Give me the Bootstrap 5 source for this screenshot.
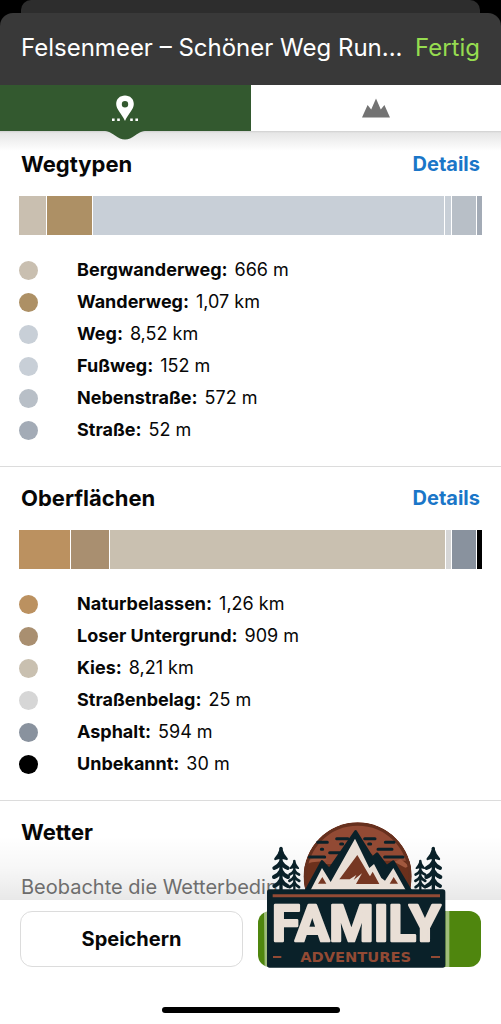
<!DOCTYPE html>
<html lang="de">
<head>
<meta charset="utf-8">
<meta name="viewport" content="width=device-width, initial-scale=1">
<title>Felsenmeer – Schöner Weg</title>
<link rel="stylesheet" href="https://cdn.jsdelivr.net/npm/bootstrap@5.3.0/dist/css/bootstrap.min.css">
<style>
  body { font-family: Inter, "Liberation Sans", sans-serif; color: #070707; background: #000; }
  .sheet-behind { height: 13px; margin: 0 21px; background: #2d2d2d; border-radius: 10px 10px 0 0; }
  .sheet-head { height: 72px; padding: 0 21px 3px; gap: 12px; background: #393939; border-radius: 13px 13px 0 0; }
  .sheet-title, .done-link { font-size: 24px; line-height: 32px; }
  .done-link { color: #96dc50; }
  .view-tab { display: block; height: 46px; border: 0; background: #fff; }
  .view-tab.active { background: #33592f; }
  .view-tab svg { display: block; margin: 0 auto; }
  .tab-notch { top: 100%; left: 50%; transform: translateX(-50%); margin-top: -1px; z-index: 3; }
  .view-tabs { z-index: 2; }
  .scroll-area { overflow-y: auto; scrollbar-width: none; min-height: 0; }
  .scroll-area::-webkit-scrollbar { display: none; }
  .shade-top, .shade-bottom { left: 0; right: 0; pointer-events: none; }
  .shade-top { top: 0; height: 20px; background: linear-gradient(#cfcfcf 0, #e6e6e6 2px, rgba(255,255,255,0)); }
  .shade-bottom { bottom: 0; height: 64px; background: linear-gradient(rgba(0,0,0,0), rgba(0,0,0,.03) 50%, rgba(0,0,0,.09)); }
  .info-block { padding: 15px 19px 20px; border-bottom: 1px solid #dcdcdc; }
  .info-block:first-child { margin-top: 2px; }
  .info-head { padding: 0 2px; }
  .info-title { font-size: 22px; line-height: 32px; font-weight: 700; }
  .info-link { font-size: 20px; line-height: 32px; font-weight: 700; color: #1a76c8; }
  .share-bar { height: 39px; gap: 1px; margin: 16px 0 19px; }
  .share-bar span { flex: 1 1 0; min-width: 5px; }
  .legend-row { height: 32px; gap: 39px; font-size: 18px; line-height: 32px; }
  .legend-row dt { font-weight: 700; }
  .legend-row dd { margin-left: 7px; }
  .dot { width: 19px; height: 19px; border-radius: 50%; flex: none; }
  .t-berg { background: #c9bfb0; } .t-wander { background: #ad9065; }
  .t-weg { background: #c8cfd7; } .t-fuss { background: #c8cfd7; }
  .t-neben { background: #b8bfc7; } .t-strasse { background: #a3abb6; }
  .s-natur { background: #bb9160; } .s-loser { background: #a98f70; }
  .s-kies { background: #c9c0b0; } .s-belag { background: #d6d6d6; }
  .s-asphalt { background: #89929e; } .s-unbekannt { background: #000; }
  .weather-note { margin: 27px 2px 0; font-size: 20px; line-height: 24px; color: #757575; }
  .foot { padding: 11px 20px; }
  .foot-actions { gap: 15px; }
  .foot-btn { height: 56px; border-radius: 12px; font-size: 20px; font-weight: 700; }
  .save-btn, .save-btn:hover { background: #fff; border: 1px solid #dcdcdc; color: #070707; }
  .go-btn, .go-btn:hover { background: #4f860e; border: 0; }
  .brand-mark { left: 4px; bottom: -1px; pointer-events: none; }
  .brand-name { font-family: "Liberation Sans Narrow", Roboto, sans-serif; font-weight: 700; font-size: 152px; }
  .brand-sub { font-family: "DejaVu Sans", sans-serif; font-weight: 700; font-size: 44px; }
  .home-bar { width: 178px; height: 6px; border-radius: 3px; background: #000; margin: 40px auto 0; }
</style>
</head>
<body>
<div class="d-flex flex-column vh-100">
  <div class="sheet-behind flex-shrink-0"></div>
  <header class="sheet-head d-flex align-items-center flex-shrink-0">
    <h1 class="sheet-title text-white fw-normal text-nowrap flex-fill mb-0">Felsenmeer – Schöner Weg Run...</h1>
    <a href="#" class="done-link text-decoration-none">Fertig</a>
  </header>

  <nav class="view-tabs row g-0 flex-shrink-0 position-relative" aria-label="Ansicht">
    <div class="col-6 position-relative">
      <button type="button" class="view-tab active w-100 p-0" aria-label="Karte">
        <svg width="28" height="28" viewBox="0 0 28 28" fill="#fff"><path fill-rule="evenodd" d="M14 1.500C8.800 1.500 5.200 5 5.200 10c0 5.500 5.500 9.500 8.800 17 3.300-7.500 8.800-11.500 8.800-17 0-5-3.600-8.500-8.800-8.500zm0 5.500a3.200 3.200 0 1 1 0 6.400 3.200 3.200 0 0 1 0-6.400z"/><path d="M1 24.500h2.600v2.600H1zM6.200 24.500h2.600v2.600H6.200zM19.200 24.500h2.600v2.600h-2.600zM24.400 24.500H27v2.600h-2.600z"/></svg>
      </button>
      <svg class="tab-notch position-absolute" width="44" height="10" viewBox="0 0 44 10"><path d="M0 0h44v1c-6 0-8 2-12 4.500C28 8 26 9.500 22 9.500S16 8 12 5.500C8 3 6 1 0 1z" fill="#33592f"/></svg>
    </div>
    <div class="col-6">
      <button type="button" class="view-tab w-100 p-0" aria-label="Höhenprofil">
        <svg width="28" height="20" viewBox="0 0 28 20" fill="#737373"><path d="M0 19.500L5.600 7l3.600 4.500L14 .500l4.800 11L22.400 7 28 19.500z"/></svg>
      </button>
    </div>
  </nav>

  <div class="position-relative flex-fill d-flex flex-column bg-white overflow-hidden">
    <div class="shade-top position-absolute"></div>
    <main class="scroll-area flex-fill">
      <section class="info-block">
        <div class="info-head d-flex justify-content-between">
          <h2 class="info-title mb-0">Wegtypen</h2>
          <a href="#" class="info-link text-decoration-none">Details</a>
        </div>
        <div class="share-bar d-flex">
          <span class="t-berg" style="flex-grow:666"></span><span class="t-wander" style="flex-grow:1070"></span><span class="t-weg" style="flex-grow:8520"></span><span class="t-fuss" style="flex-grow:152"></span><span class="t-neben" style="flex-grow:572"></span><span class="t-strasse" style="flex-grow:52"></span>
        </div>
        <div class="legend-list">
          <dl class="legend-row d-flex align-items-center mb-0"><span class="dot t-berg"></span><div class="d-flex"><dt>Bergwanderweg:</dt><dd class="mb-0">666 m</dd></div></dl>
          <dl class="legend-row d-flex align-items-center mb-0"><span class="dot t-wander"></span><div class="d-flex"><dt>Wanderweg:</dt><dd class="mb-0">1,07 km</dd></div></dl>
          <dl class="legend-row d-flex align-items-center mb-0"><span class="dot t-weg"></span><div class="d-flex"><dt>Weg:</dt><dd class="mb-0">8,52 km</dd></div></dl>
          <dl class="legend-row d-flex align-items-center mb-0"><span class="dot t-fuss"></span><div class="d-flex"><dt>Fußweg:</dt><dd class="mb-0">152 m</dd></div></dl>
          <dl class="legend-row d-flex align-items-center mb-0"><span class="dot t-neben"></span><div class="d-flex"><dt>Nebenstraße:</dt><dd class="mb-0">572 m</dd></div></dl>
          <dl class="legend-row d-flex align-items-center mb-0"><span class="dot t-strasse"></span><div class="d-flex"><dt>Straße:</dt><dd class="mb-0">52 m</dd></div></dl>
        </div>
      </section>

      <section class="info-block">
        <div class="info-head d-flex justify-content-between">
          <h2 class="info-title mb-0">Oberflächen</h2>
          <a href="#" class="info-link text-decoration-none">Details</a>
        </div>
        <div class="share-bar d-flex">
          <span class="s-natur" style="flex-grow:1260"></span><span class="s-loser" style="flex-grow:909"></span><span class="s-kies" style="flex-grow:8210"></span><span class="s-belag" style="flex-grow:25"></span><span class="s-asphalt" style="flex-grow:594"></span><span class="s-unbekannt" style="flex-grow:30"></span>
        </div>
        <div class="legend-list">
          <dl class="legend-row d-flex align-items-center mb-0"><span class="dot s-natur"></span><div class="d-flex"><dt>Naturbelassen:</dt><dd class="mb-0">1,26 km</dd></div></dl>
          <dl class="legend-row d-flex align-items-center mb-0"><span class="dot s-loser"></span><div class="d-flex"><dt>Loser Untergrund:</dt><dd class="mb-0">909 m</dd></div></dl>
          <dl class="legend-row d-flex align-items-center mb-0"><span class="dot s-kies"></span><div class="d-flex"><dt>Kies:</dt><dd class="mb-0">8,21 km</dd></div></dl>
          <dl class="legend-row d-flex align-items-center mb-0"><span class="dot s-belag"></span><div class="d-flex"><dt>Straßenbelag:</dt><dd class="mb-0">25 m</dd></div></dl>
          <dl class="legend-row d-flex align-items-center mb-0"><span class="dot s-asphalt"></span><div class="d-flex"><dt>Asphalt:</dt><dd class="mb-0">594 m</dd></div></dl>
          <dl class="legend-row d-flex align-items-center mb-0"><span class="dot s-unbekannt"></span><div class="d-flex"><dt>Unbekannt:</dt><dd class="mb-0">30 m</dd></div></dl>
        </div>
      </section>

      <section class="info-block border-0 pb-0">
        <div class="info-head"><h2 class="info-title mb-0">Wetter</h2></div>
        <p class="weather-note">Beobachte die Wetterbedin</p>
      </section>
    </main>
    <div class="shade-bottom position-absolute"></div>
  </div>

  <footer class="foot bg-white flex-shrink-0">
    <div class="foot-actions d-flex">
      <div class="col"><button type="button" class="btn foot-btn save-btn w-100">Speichern</button></div>
      <div class="col position-relative">
        <button type="button" class="btn foot-btn go-btn w-100" aria-label="Start"></button>
        <svg class="brand-mark position-absolute" width="188" height="148" viewBox="66 30 564 444" role="img" aria-label="Family Adventures">
          <defs>
            <clipPath id="sun"><circle cx="353" cy="199" r="162"/></clipPath>
            <g id="pine" fill="none" stroke="#0a2129" stroke-width="10" stroke-linecap="round" stroke-linejoin="round"><path d="M0 2V128"/><path d="M0 4L-7 20-17 34 0 29 17 34 7 20z" fill="#0a2129" stroke-width="7"/><path d="M-20 61Q-7 56 0 43 7 56 20 61M-21 88Q-7 83 0 69 7 83 21 88M-20 115Q-7 110 0 96 7 110 20 115" stroke-width="12"/></g>
          </defs>
          <path d="M72 300h10v172H74zM616 300h12v172h-12z" fill="#fff" opacity=".45"/>
          <!-- sun with sky streaks -->
          <g clip-path="url(#sun)">
            <circle cx="353" cy="199" r="162" fill="#924a34"/>
            <path d="M191 170q40-30 62-8l34 0 66-60 70 50 90 0v100H191z" fill="#6b301c"/>
            <path d="M200 158q30-28 62-8l-30 5zM462 155l20-8 26 22-12 4z" fill="#a1583e"/>
            <circle cx="353" cy="199" r="157" fill="none" stroke="#66301e" stroke-width="10"/>
          </g>
          <path d="M233 97h29M290 86h34M374 86h31M244 118h4M302 102h6M386 102h6M208 141h46M269 128h32M414 118h42M436 97h26M434 141h55" stroke="#0a2129" stroke-width="9" stroke-linecap="round" fill="none"/>
          <!-- mountains -->
          <path d="M198 242l48-88 22 24L347 64l50 80 14-13 29 38 20-14 52 87z" fill="#0a2129" stroke="#0a2129" stroke-width="8" stroke-linejoin="round"/>
          <path d="M212 240l34-66 26 42L345 86l43 88 14-12 22 42 11 8 25-38 37 66z" fill="#e9dfd6"/>
          <path d="M298 208l54-73 34 58 4 6 8-14 20 37h-70l18-32-25 20 8-15-20 13z" fill="#763722"/>
          <path d="M234 221l13-20 12 20zM449 221l12-20 13 20z" fill="#763722"/>
          <!-- pines -->
          <use href="#pine" transform="translate(123 113)"/>
          <use href="#pine" transform="translate(163 151) scale(.7)"/>
          <use href="#pine" transform="translate(541 151) scale(.7)"/>
          <use href="#pine" transform="translate(580 113)"/>
          <!-- name plate -->
          <rect x="81" y="238" width="535" height="235" rx="8" fill="#0a2129"/>
          <path d="M98 257h502" stroke="#924a34" stroke-width="9"/>
          <text class="brand-name" x="349" y="393" text-anchor="middle" fill="#e9dfd6" stroke="#e9dfd6" stroke-width="8" stroke-linejoin="round">FAMILY</text>
          <text class="brand-sub" x="347" y="456" text-anchor="middle" fill="#924a34">ADVENTURES</text>
          <path d="M99 441h25M573 441h27" stroke="#924a34" stroke-width="6"/>
        </svg>
      </div>
    </div>
    <div class="home-bar"></div>
  </footer>
</div>
<script src="https://cdn.jsdelivr.net/npm/bootstrap@5.3.0/dist/js/bootstrap.bundle.min.js"></script>
</body>
</html>
